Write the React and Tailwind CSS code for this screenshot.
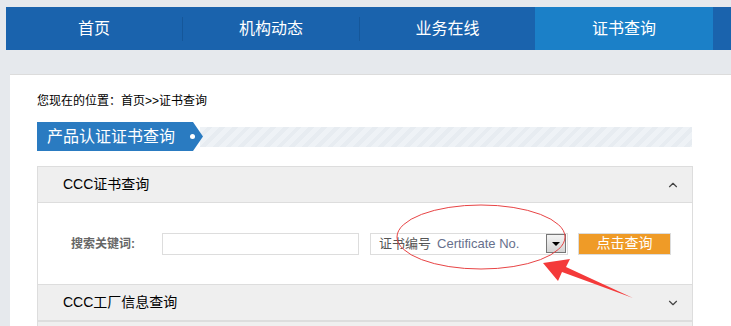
import { ChevronUp, ChevronDown } from "lucide-react";

const cjk = "font-['Liberation_Sans','Noto_Sans_CJK_SC',sans-serif]";

const navItems = [
  { label: "首页", w: "w-[176px]" },
  { label: "机构动态", w: "w-[176px]" },
  { label: "业务在线", w: "w-[175px]" },
];

function Sep() {
  return <div className="w-px h-[24px] bg-[#2b72b8] border-l border-[#15579a]" />;
}

export default function App() {
  return (
    <div className={`relative h-[326px] overflow-hidden bg-[#e6e9ed] pt-[7px] ${cjk}`}>
      {/* top nav */}
      <nav className="ml-[6px] flex h-[43px] items-center bg-[#1a63ad] text-[16px] text-white">
        {navItems.map((it, i) => (
          <div key={it.label} className="flex h-full items-center">
            <div className={`${it.w} flex h-full items-center justify-center`}>{it.label}</div>
            {i < 2 && <Sep />}
          </div>
        ))}
        <div className="flex h-full w-[178px] items-center justify-center bg-[#1b80c8]">证书查询</div>
      </nav>

      <main className="mt-[24px] ml-[10px] border-t border-[#dcdcdc] bg-white pt-[18px] pl-[27px]">
        <div className="h-[16px] text-[12px] leading-[16px] text-black">
          您现在的位置：首页&gt;&gt;证书查询
        </div>

        {/* title banner */}
        <div className="mt-[13px] flex h-[29px] w-[655px] items-center">
          <div className="relative z-10 flex h-full w-[166px] shrink-0 items-center bg-[#2a7bc1] pl-[10px] text-[16px] text-white [clip-path:polygon(0_0,156px_0,166px_50%,156px_100%,0_100%)]">
            产品认证证书查询
            <span className="absolute left-[153px] top-[12px] h-[5px] w-[5px] rounded-full bg-white" />
          </div>
          <div className="-ml-[3px] h-[20px] flex-1 bg-[repeating-linear-gradient(135deg,#eef2f6_0,#eef2f6_5px,#e7ecf1_5px,#e7ecf1_9px)]" />
        </div>

        {/* accordion */}
        <div className="mt-[15px] w-[656px] border border-[#dddddd]">
          <div className="flex h-[35px] items-center justify-between bg-[#efefef] pl-[25px] pr-[12px] text-[14px] text-black">
            <span>CCC证书查询</span>
            <ChevronUp size={14} strokeWidth={2} className="text-[#444]" />
          </div>

          <div className="flex h-[83px] items-center border-y border-[#dddddd] bg-white pl-[33px]">
            <div className="w-[91px] text-[12px] font-bold text-[#666]">搜索关键词:</div>
            <input className="h-[22px] w-[197px] border border-[#dddddd] outline-none" />
            <div className="ml-[11px] flex h-[22px] w-[198px] items-center border border-[#dddddd] pl-[8px] pr-px">
              <span className="text-[13px] text-[#555]">证书编号</span>
              <span className="ml-[6px] font-['Liberation_Sans',sans-serif] text-[13px] text-[#67708c]">Certificate No.</span>
              <span className="ml-auto flex h-[19px] w-[20px] items-center justify-center border border-[#777] bg-gradient-to-b from-[#f4f4f4] to-[#d4d4d4]">
                <span className="h-0 w-0 border-x-[4px] border-t-[4px] border-x-transparent border-t-black" />
              </span>
            </div>
            <button className="ml-[10px] flex h-[22px] w-[93px] items-center justify-center border border-[#dcdcdc] bg-[#ef9b27] text-[14px] text-white">
              点击查询
            </button>
          </div>

          <div className="flex h-[35px] items-center justify-between bg-[#efefef] pl-[25px] pr-[12px] text-[14px] text-black">
            <span>CCC工厂信息查询</span>
            <ChevronDown size={14} strokeWidth={2} className="text-[#444]" />
          </div>
          <div className="h-[35px] border-t-2 border-[#dddddd] bg-[#efefef]" />
        </div>
      </main>

      {/* red annotation */}
      <svg className="pointer-events-none absolute left-0 top-0" width="731" height="326">
        <ellipse cx="481" cy="237" rx="84" ry="32" fill="none" stroke="#e84445" strokeWidth="1" />
        <polygon points="543,263 570,259 566,267 633,298 562,272 558,281" fill="#f43a3a" />
      </svg>
    </div>
  );
}
